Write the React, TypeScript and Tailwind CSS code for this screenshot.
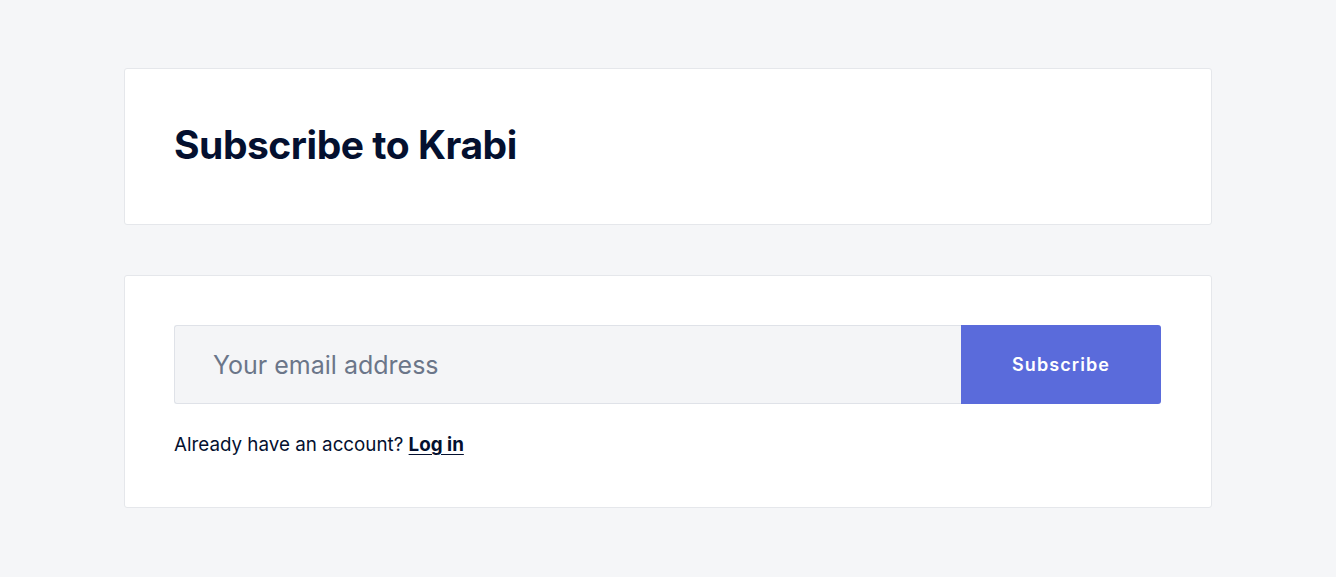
import React from "react";

export default function App() {
  return (
    <div className="min-h-[577px] w-full bg-[#f5f6f8] pt-[68px]" style={{ fontFamily: "Inter, 'Noto Sans', sans-serif" }}>
      <div className="mx-auto flex w-[1088px] flex-col gap-[50px]">
        <div className="rounded-[3px] border border-[#e5e7eb] bg-white pl-[49px] pr-[50px] pt-[48px] pb-[52px]">
          <h1 className="text-[39px] font-bold leading-[55px] tracking-[-0.012em] text-[#04102f]">Subscribe to Krabi</h1>
        </div>
        <div className="rounded-[3px] border border-[#e5e7eb] bg-white pl-[49px] pr-[50px] pt-[49px] pb-[49px]">
          <form className="flex h-[79px]" onSubmit={(e) => e.preventDefault()}>
            <input
              type="email"
              placeholder="Your email address"
              className="h-full flex-1 rounded-l-[3px] border border-r-0 border-[#dfe2e8] bg-[#f4f5f7] px-[38px] text-[25px] text-[#04102f] outline-none placeholder:text-[#6b7689]"
            />
            <button
              type="submit"
              className="h-full w-[200px] rounded-r-[3px] bg-[#5a6bdb] text-[18px] font-semibold tracking-[0.06em] text-white"
            >
              Subscribe
            </button>
          </form>
          <p className="mt-[27px] text-[18.8px] leading-[27px] text-[#04102f]">
            Already have an account?{" "}
            <a href="#" className="font-bold underline underline-offset-[3px]">Log in</a>
          </p>
        </div>
      </div>
    </div>
  );
}
